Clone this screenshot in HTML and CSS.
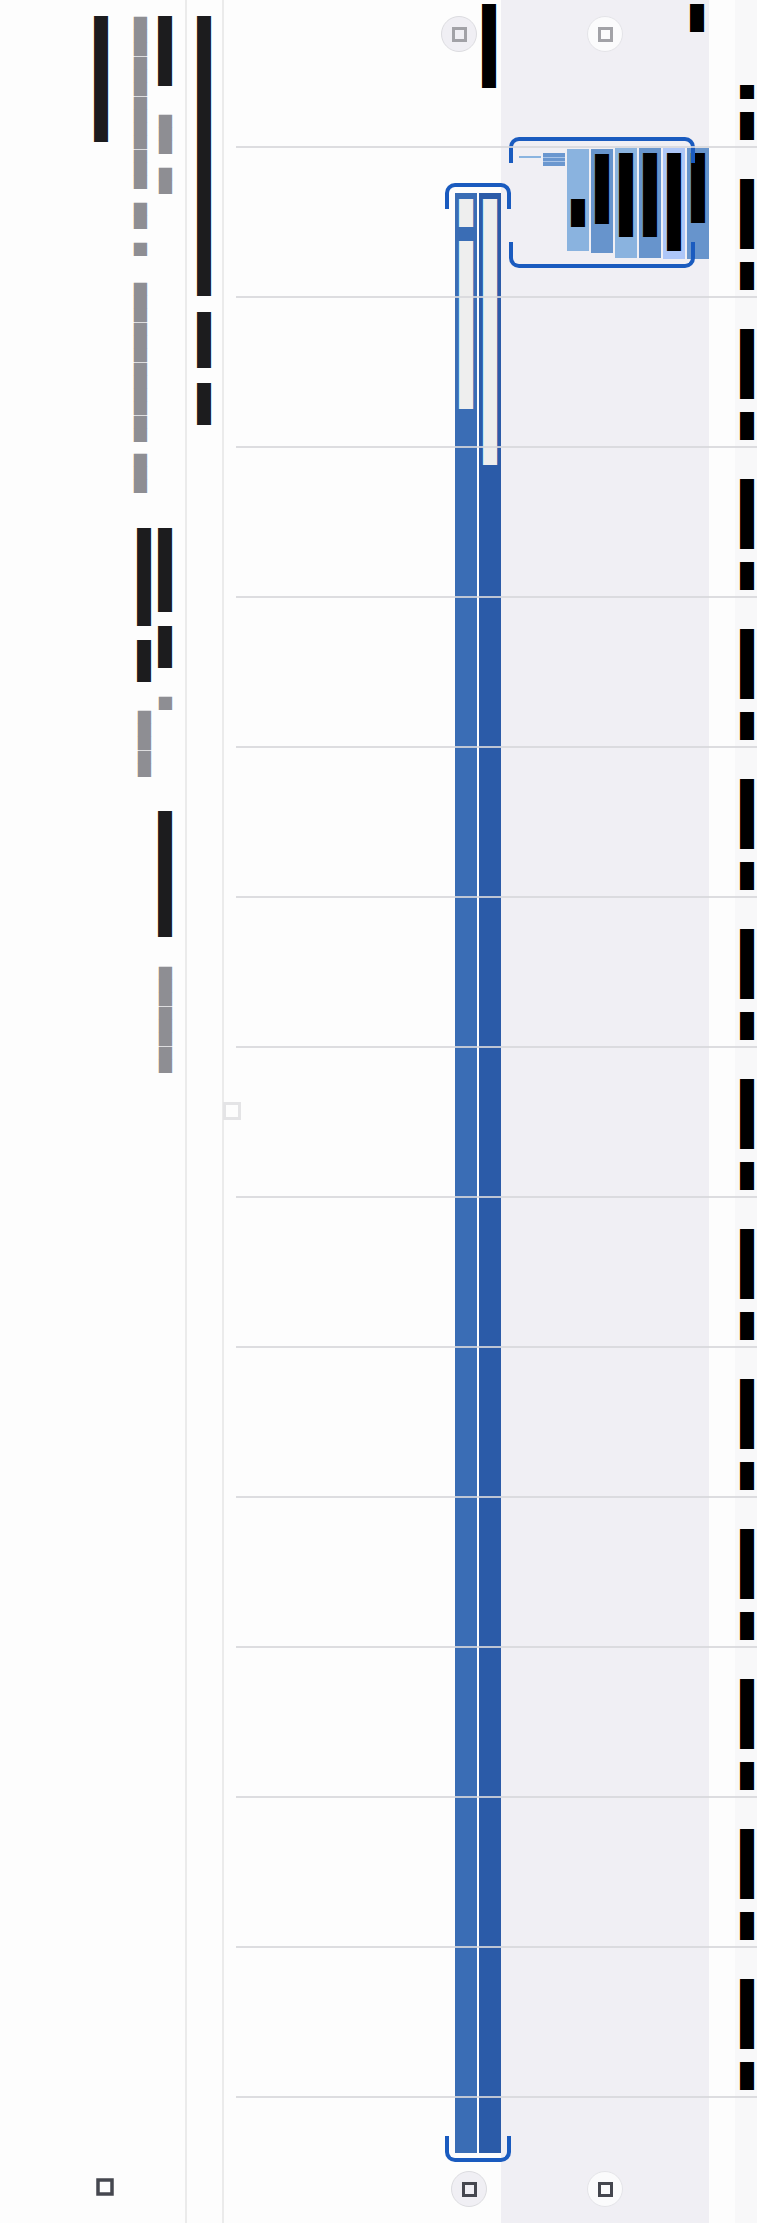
FILE: index.html
```html
<!DOCTYPE html>
<html lang="en">
<head>
    <meta charset="UTF-8">
    <meta name="viewport" content="width=device-width, initial-scale=1.0">
    <title>Schedule</title>
    <link rel="stylesheet" href="styles.css">
</head>
<body>
    <div class="page">
        <aside class="sidebar">
            <div class="entry entry-first">
                <div class="vt line"><span class="dk">█████</span><span class="gy sp-28">███</span><span class="gy sp-13">██</span></div>
                <div class="vt line line-sub"><span class="gy">█████████████</span><span class="gy sp-13">██</span><span class="gy sp-13">█</span><span class="gy sp-27">████████████</span><span class="gy sp-12">███</span></div>
                <div class="vt line line-meta"><span class="dk">█████████</span></div>
            </div>
            <div class="entry">
                <div class="vt line"><span class="dk">██████</span><span class="dk sp-14">███</span><span class="gy sp-28">█</span><span class="dk sp-102">█████████</span><span class="gy sp-29">████████</span></div>
                <div class="vt line line-second"><span class="dk">███████</span><span class="dk sp-14">███</span><span class="gy sp-28">█████</span></div>
            </div>
            <div class="sidebar-foot">
                <svg width="18" height="18" viewBox="0 0 18 18"><rect x="2" y="2" width="14" height="14" fill="none" stroke="#45474f" stroke-width="3.5"/></svg>
            </div>
        </aside>

        <div class="strip">
            <div class="vt strip-title"><span class="dk">████████████████████</span><span class="dk sp-16">████</span><span class="dk sp-15">███</span></div>
        </div>

        <main class="chart">
            <div class="col col-plain"></div>
            <div class="col col-shade"></div>
            <div class="col col-gap"></div>
            <div class="col col-axis">
                <div class="tick tick-first"><div class="vt tick-label"><span>█</span><span class="sp-13">██</span></div></div>
                <div class="tick"><div class="vt tick-label"><span>█████</span><span class="sp-13">██</span></div></div>
                <div class="tick"><div class="vt tick-label"><span>█████</span><span class="sp-13">██</span></div></div>
                <div class="tick"><div class="vt tick-label"><span>█████</span><span class="sp-13">██</span></div></div>
                <div class="tick"><div class="vt tick-label"><span>█████</span><span class="sp-13">██</span></div></div>
                <div class="tick"><div class="vt tick-label"><span>█████</span><span class="sp-13">██</span></div></div>
                <div class="tick"><div class="vt tick-label"><span>█████</span><span class="sp-13">██</span></div></div>
                <div class="tick"><div class="vt tick-label"><span>█████</span><span class="sp-13">██</span></div></div>
                <div class="tick"><div class="vt tick-label"><span>█████</span><span class="sp-13">██</span></div></div>
                <div class="tick"><div class="vt tick-label"><span>█████</span><span class="sp-13">██</span></div></div>
                <div class="tick"><div class="vt tick-label"><span>█████</span><span class="sp-13">██</span></div></div>
                <div class="tick"><div class="vt tick-label"><span>█████</span><span class="sp-13">██</span></div></div>
                <div class="tick"><div class="vt tick-label"><span>█████</span><span class="sp-13">██</span></div></div>
                <div class="tick"><div class="vt tick-label"><span>█████</span><span class="sp-13">██</span></div></div>
            </div>

            <!-- column headers -->
            <div class="vt head head-a">██████</div>
            <div class="vt head head-b">██</div>

            <button class="round-btn btn-top-a" type="button"><svg width="15" height="15" viewBox="0 0 15 15"><rect x="1.5" y="1.5" width="12" height="12" fill="none" stroke="#a2a2a7" stroke-width="3"/></svg></button>
            <button class="round-btn btn-light btn-top-b" type="button"><svg width="15" height="15" viewBox="0 0 15 15"><rect x="1.5" y="1.5" width="12" height="12" fill="none" stroke="#a2a2a7" stroke-width="3"/></svg></button>
            <button class="round-btn btn-bottom-a" type="button"><svg width="15" height="15" viewBox="0 0 15 15"><rect x="1.5" y="1.5" width="12" height="12" fill="none" stroke="#45474f" stroke-width="3"/></svg></button>
            <button class="round-btn btn-light btn-bottom-b" type="button"><svg width="15" height="15" viewBox="0 0 15 15"><rect x="1.5" y="1.5" width="12" height="12" fill="none" stroke="#45474f" stroke-width="3"/></svg></button>

            <div class="edge-icon">
                <svg width="18" height="18" viewBox="0 0 18 18"><rect x="1.5" y="1.5" width="15" height="15" fill="none" stroke="#e4e4e6" stroke-width="3"/></svg>
            </div>

            <!-- tall pair of bars -->
            <div class="bars">
                <div class="bar bar-a"><div class="vt bar-text">██<span class="bar-mark">█</span>████████████</div></div>
                <div class="bar bar-b"><div class="vt bar-text">███████████████████</div></div>
            </div>
            <div class="select select-bars">
                <div class="select-top"></div>
                <div class="select-bottom"></div>
            </div>

            <!-- small chips in shaded column -->
            <div class="chips">
                <div class="chip chip-line"></div>
                <div class="chip chip-tiny"></div>
                <div class="chip chip-light chip-3"><div class="vt chip-text">██</div></div>
                <div class="chip chip-4"><div class="vt chip-text">█████</div></div>
                <div class="chip chip-light chip-5"><div class="vt chip-text">██████</div></div>
                <div class="chip chip-6"><div class="vt chip-text">██████</div></div>
                <div class="chip chip-pale chip-7"><div class="vt chip-text">███████</div></div>
                <div class="chip chip-8"><div class="vt chip-text">█████</div></div>
            </div>
            <div class="select select-chips">
                <div class="select-top"></div>
                <div class="select-bottom"></div>
            </div>

            <div class="grid">
                <div class="grid-line"></div>
                <div class="grid-line"></div>
                <div class="grid-line"></div>
                <div class="grid-line"></div>
                <div class="grid-line"></div>
                <div class="grid-line"></div>
                <div class="grid-line"></div>
                <div class="grid-line"></div>
                <div class="grid-line"></div>
                <div class="grid-line"></div>
                <div class="grid-line"></div>
                <div class="grid-line"></div>
                <div class="grid-line"></div>
                <div class="grid-line"></div>
            </div>
        </main>
    </div>
</body>
</html>
```

FILE: styles.css
```css
body {
    margin: 0;
    padding: 0;
    background-color: #fdfdfd;
    font-family: "Noto Sans CJK SC", "DejaVu Sans", sans-serif;
}

.page {
    display: flex;
    width: 757px;
    height: 2223px;
    overflow: hidden;
}

/* vertical text */
.vt {
    writing-mode: vertical-rl;
    text-orientation: upright;
    font-family: "Noto Sans CJK SC", "DejaVu Sans", sans-serif;
    font-size: 14px;
    line-height: 14px;
    white-space: nowrap;
}

.dk {
    color: #1c1c1e;
}

.gy {
    color: #8e8e93;
    font-size: 13.3px;
}

.sp-12 { margin-inline-start: 12px; }
.sp-13 { margin-inline-start: 13px; }
.sp-14 { margin-inline-start: 14px; }
.sp-15 { margin-inline-start: 15px; }
.sp-16 { margin-inline-start: 16px; }
.sp-27 { margin-inline-start: 27px; }
.sp-28 { margin-inline-start: 28px; }
.sp-29 { margin-inline-start: 29px; }
.sp-102 { margin-inline-start: 102px; }

/* sidebar */
.sidebar {
    width: 187px;
    flex-shrink: 0;
    display: flex;
    flex-direction: column;
    padding-top: 16px;
    box-sizing: border-box;
    border-right: 2px solid #ebebeb;
}

.entry {
    display: flex;
    flex-direction: row-reverse;
    padding-right: 13px;
}

.entry-first {
    height: 512px;
}

.line {
    width: 14px;
}

.line-sub {
    margin-right: 11px;
}

.line-meta {
    margin-right: 25px;
}

.line-second {
    margin-right: 7px;
}

.sidebar-foot {
    margin-top: auto;
    margin-bottom: 27px;
    padding-left: 96px;
    height: 18px;
}

.sidebar-foot svg {
    display: block;
}

/* middle strip */
.strip {
    width: 37px;
    flex-shrink: 0;
    box-sizing: border-box;
    border-right: 2px solid #ebebeb;
    padding: 16px 0 0 10px;
}

.strip-title {
    width: 14px;
}

/* chart */
.chart {
    position: relative;
    display: flex;
    width: 533px;
    flex-shrink: 0;
}

.col-plain {
    width: 277px;
    background-color: #fdfdfd;
}

.col-shade {
    width: 208px;
    background-color: #f0eff4;
}

.col-gap {
    width: 26px;
    background-color: #fdfdfd;
}

.col-axis {
    width: 22px;
    background-color: #f8f8f9;
    padding-left: 5px;
    box-sizing: border-box;
}

.tick {
    height: 150px;
    padding-top: 32px;
    box-sizing: border-box;
}

.tick-first {
    height: 147px;
    padding-top: 85px;
}

.tick-label {
    color: #000;
    width: 14px;
}

.head {
    position: absolute;
    top: 4px;
    color: #000;
    width: 15px;
}

.head-a { left: 257px; }
.head-b { left: 465px; }

.round-btn {
    position: absolute;
    width: 36px;
    height: 36px;
    padding: 0;
    border-radius: 50%;
    border: 1px solid #dcdce0;
    background-color: #f0eff4;
    display: flex;
    align-items: center;
    justify-content: center;
    cursor: pointer;
}

.round-btn svg {
    display: block;
}

.btn-light {
    background-color: #fbfbfc;
    border-color: #e4e4e8;
}

.btn-top-a { left: 217px; top: 16px; }
.btn-top-b { left: 363px; top: 16px; }
.btn-bottom-a { left: 227px; top: 2171px; }
.btn-bottom-b { left: 363px; top: 2171px; }

.edge-icon {
    position: absolute;
    left: -1px;
    top: 1102px;
    height: 18px;
}

.edge-icon svg {
    display: block;
}

/* bars */
.bars {
    position: absolute;
    left: 231px;
    top: 193px;
    height: 1960px;
    display: flex;
    gap: 2px;
}

.bar {
    width: 22px;
    height: 100%;
    box-sizing: border-box;
    padding: 6px 4px 0 3px;
}

.bar-a { background-color: #3a6db5; }
.bar-b { background-color: #2b5ba8; }

.bar-text {
    width: 15px;
    line-height: 15px;
    color: #eeeeee;
}

.bar-mark {
    color: #3a6db5;
}

.select {
    position: absolute;
    display: flex;
    flex-direction: column;
    justify-content: space-between;
}

.select-top,
.select-bottom {
    height: 26px;
    border: 4px solid #1a5bbf;
    box-sizing: border-box;
}

.select-top {
    border-bottom: none;
    border-radius: 10px 10px 0 0;
}

.select-bottom {
    border-top: none;
    border-radius: 0 0 10px 10px;
}

.select-bars {
    left: 221px;
    top: 183px;
    width: 66px;
    height: 1979px;
}

.select-chips {
    left: 285px;
    top: 137px;
    width: 186px;
    height: 131px;
}

/* chips */
.chips {
    position: absolute;
    left: 295px;
    top: 148px;
    display: flex;
    align-items: flex-start;
    gap: 2px;
}

.chip {
    width: 22px;
    box-sizing: border-box;
    padding: 5px 0 0 3px;
    background-color: #6794cc;
}

.chip-light { background-color: #8ab3df; }
.chip-pale { background-color: #adc6f8; }

.chip-line {
    height: 2px;
    margin-top: 8px;
    padding: 0;
    background-color: #8ab4e0;
}

.chip-tiny {
    height: 13px;
    margin-top: 5px;
    padding: 0;
    background: linear-gradient(#6b97cf 0 4px, #a9c4e8 4px 5px, #6b97cf 5px 8px, #a9c4e8 8px 9px, #6b97cf 9px);
}

.chip-3 { height: 102px; margin-top: 1px; padding-top: 50px; }
.chip-4 { height: 104px; margin-top: 1px; }
.chip-5 { height: 110px; }
.chip-6 { height: 110px; }
.chip-7 { height: 111px; }
.chip-8 { height: 111px; }

.chip-text {
    width: 15px;
    color: #000;
}

/* horizontal grid */
.grid {
    position: absolute;
    left: 12px;
    right: 0;
    top: 146px;
    display: flex;
    flex-direction: column;
    pointer-events: none;
}

.grid-line {
    height: 150px;
    flex-shrink: 0;
    box-sizing: border-box;
    border-top: 2px solid rgba(215, 215, 218, 0.85);
}
```
